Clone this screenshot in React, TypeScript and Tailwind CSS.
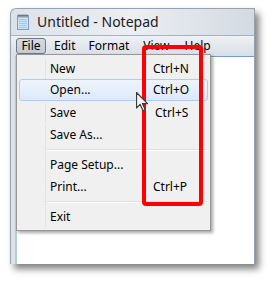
import React from 'react';

const items: ({ label: string; key?: string; active?: boolean; shift?: boolean } | 'sep')[] = [
  { label: 'New', key: 'Ctrl+N' },
  { label: 'Open...', key: 'Ctrl+O', active: true },
  { label: 'Save', key: 'Ctrl+S', shift: true },
  { label: 'Save As...' },
  'sep',
  { label: 'Page Setup...' },
  { label: 'Print...', key: 'Ctrl+P' },
  'sep',
  { label: 'Exit' },
];

function NotepadIcon() {
  return (
    <svg width="12" height="16" viewBox="0 0 12 16">
      <rect x="0.5" y="1.5" width="11" height="14" fill="#cfe2f4" stroke="#7f9fc0" />
      <path d="M2 5.5h8M2 7.5h8M2 9.5h8M2 11.5h8M2 13.5h8" stroke="#a9c6e2" strokeWidth="1" />
      <path d="M2 0.5v3M4 0.5v3M6 0.5v3M8 0.5v3M10 0.5v3" stroke="#555" strokeWidth="1" />
    </svg>
  );
}

function Cursor() {
  return (
    <svg width="13" height="20" viewBox="0 0 13 20">
      <path
        d="M0.5 0.5 L0.5 16 L4.2 12.4 L7 18.8 L9.2 17.8 L6.5 11.6 L11.5 11.6 Z"
        fill="#f4f4f4"
        stroke="#3a3a3a"
        strokeWidth="1.2"
        strokeLinejoin="round"
      />
    </svg>
  );
}

export default function App() {
  return (
    <div className="relative w-[273px] h-[283px] bg-white overflow-hidden font-['Noto_Sans',sans-serif] text-[12px] text-black">
      {/* window */}
      <div className="ml-[10px] mt-[8px] w-[245px] h-[256px] flex flex-col rounded-tl-[6px] border border-[#98a2ad] border-b-0 bg-linear-to-r from-[#dce2e9] via-[#eceff3] to-[#d3dae2] shadow-[4px_5px_7px_rgba(0,0,0,0.5)]">
        <div className="h-[26px] flex items-center pl-[6px] gap-[8px] shrink-0">
          <NotepadIcon />
          <span className="text-[14px] leading-none text-[#1b1b1b]">Untitled - Notepad</span>
        </div>
        <div className="h-[21px] shrink-0 flex items-center pl-[5px] border-t border-[#a9b1ba] bg-linear-to-b from-[#eef1f5] to-[#d9dfe6]">
          <div className="h-[16px] w-[30px] flex items-center justify-center rounded-[3px] border border-[#6e7884] bg-linear-to-b from-[#d5dbe2] to-[#c3cbd4] leading-none">
            File
          </div>
          <span className="ml-[8px] leading-none">Edit</span>
          <span className="ml-[13px] leading-none">Format</span>
          <span className="ml-[14px] leading-none">View</span>
          <span className="ml-[15px] leading-none">Help</span>
        </div>
        <div className="flex-1 ml-[4px] bg-white border-t border-[#6f9ccd] border-l-[2px] border-l-[#b9cadb]" />
      </div>

      {/* file menu */}
      <div className="absolute left-[16px] top-[54px] w-[195px] h-[177px] bg-[#f0f0f0] border border-[#979797] pt-[3px] shadow-[2px_2px_3px_rgba(0,0,0,0.35)]">
        {items.map((it, i) =>
          it === 'sep' ? (
            <div key={i} className="flex mx-[2px] px-[1px] h-[8px] first:h-[7px]">
              <div className="w-[26px] shrink-0 border-r border-[#e2e3e3]" />
              <div className="flex-1 flex flex-col justify-center pl-[1px]">
                <div className="h-[1px] bg-[#e0e0e0]" />
                <div className="h-[1px] bg-white" />
              </div>
            </div>
          ) : (
            <div
              key={i}
              className={
                it.active
                  ? 'flex items-center h-[22px] mx-[2px] -mt-[1px] mb-[1px] rounded-[3px] border border-[#aecbf0] bg-linear-to-b from-[#eef4fc] to-[#dde9fa]'
                  : 'flex items-center h-[22px] mx-[2px] border border-transparent'
              }
            >
              <div className={it.active ? 'w-[26px] h-full shrink-0' : 'w-[26px] h-full shrink-0 border-r border-[#e2e3e3]'} />
              <span className="w-[107px] shrink-0 pl-[4px] leading-none">{it.label}</span>
              {it.key && <span className={it.shift ? 'pl-[2px] leading-none' : 'leading-none'}>{it.key}</span>}
            </div>
          )
        )}
      </div>

      {/* annotation */}
      <div className="absolute left-[142px] top-[45px] w-[61px] h-[161px] border-[4px] border-[#ff0000] rounded-[4px]" />

      <div className="absolute left-[136px] top-[92px]">
        <Cursor />
      </div>
    </div>
  );
}
